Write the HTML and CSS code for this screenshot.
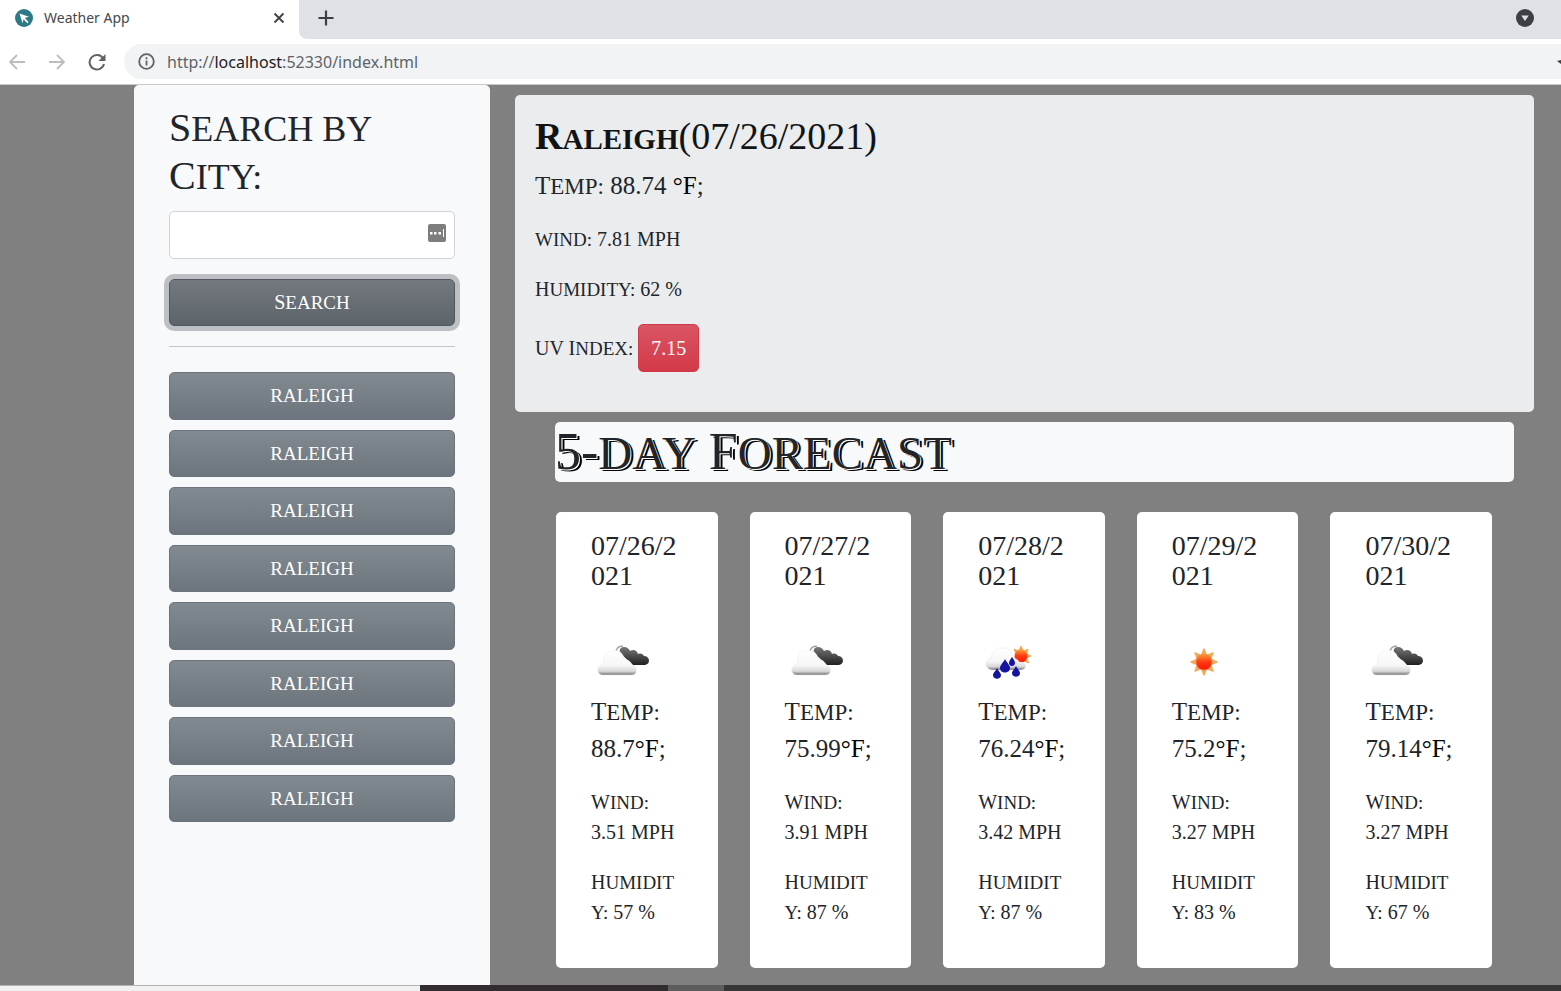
FILE: index.html
```html
<!DOCTYPE html>
<html lang="en">
<head>
<meta charset="utf-8">
<title>Weather App</title>
<link rel="stylesheet" href="styles.css">
</head>
<body>
<svg class="defs" aria-hidden="true">
  <defs>
    <linearGradient id="white-cloud" x1="0" y1="0" x2="0" y2="1">
      <stop offset="0" stop-color="#fff"/><stop offset=".6" stop-color="#f7f7f7"/><stop offset=".85" stop-color="#d8d8d8"/><stop offset="1" stop-color="#707070"/>
    </linearGradient>
    <linearGradient id="dark-cloud" x1="0" y1="0" x2="0" y2="1">
      <stop offset="0" stop-color="#777"/><stop offset=".5" stop-color="#4c4c4c"/><stop offset="1" stop-color="#202020"/>
    </linearGradient>
    <linearGradient id="sun-disc" x1="0" y1="0" x2="0" y2="1">
      <stop offset="0" stop-color="#f9a03a"/><stop offset=".5" stop-color="#ff3a10"/><stop offset="1" stop-color="#fb1508"/>
    </linearGradient>
    <symbol id="clouds" viewBox="0 0 64 64">
      <path d="M29 24c-1-4 1-6 4-6 3 0 5 2 6 4 3-2 7-1 8 3 3-1 5 0 6 2 6 0 7 8 1 9H42z" fill="url(#dark-cloud)"/>
      <path d="M25 24c0-5 3-7 7-7" fill="none" stroke="#a5a5a5" stroke-width="1.500"/>
      <path d="M12 46c-6 0-8-8 0-11 0-9 4-14 10-13 6-2 11 3 11 9 4-1 7 2 8 5 6 1 6 10 0 10z" fill="url(#white-cloud)" stroke="#ececec" stroke-width=".5"/>
    </symbol>
    <symbol id="sun" viewBox="0 0 64 64">
      <path d="M32 20l2 5h-4zM32 46l2-5h-4zM19 33l5-2v4zM45 33l-5-2v4zM23 24l5 2-3 3zM41 24l-5 2 3 3zM23 42l5-2-3-3zM41 42l-5-2 3-3z" fill="#f0ac5c" stroke="#f0ac5c" stroke-width="1.500" stroke-linejoin="round"/>
      <circle cx="32" cy="33" r="8" fill="url(#sun-disc)" stroke="#ee8240" stroke-width=".6"/>
    </symbol>
    <symbol id="showers" viewBox="0 0 64 64">
      <path d="M43 17l2 4h-4zM53 27l-5-2v4zM36 20l5 2-3 3zM50 20l-4 2 3 2zM51 34l-5-2 3-2z" fill="#f0ac5c" stroke="#f0ac5c" stroke-linejoin="round"/>
      <circle cx="43" cy="27" r="6.500" fill="url(#sun-disc)"/>
      <path d="M14 41c-8-1-8-11-1-12 2-8 6-11 11-10 7-1 10 4 10 11 3-1 6 0 7 3 8 0 9 7 2 8z" fill="url(#white-cloud)" stroke="#e4e4e4" stroke-width=".5"/>
      <path d="M27 30c2 4 5 6 5 9 0 6-10 6-10 0 0-3 3-5 5-9zM34 28c2 3 3 4 3 6 0 4-6 4-6 0 0-2 1-3 3-6zM19 39c2 4 4 5 4 7 0 5-8 5-8 0 0-2 2-3 4-7zM38 37c2 4 4 5 4 7 0 5-8 5-8 0 0-2 2-3 4-7z" fill="#1414a0"/>
    </symbol>
  </defs>
</svg>

<header class="browser">
  <div class="tabs">
    <div class="tab">
      <svg class="favicon" viewBox="0 0 18 18" aria-hidden="true"><circle cx="9" cy="9" r="9" fill="#2c7a86"/><path d="M4.500 4.500l9.500 3.200-4.200 1.400 3.700 4-1.200 1.200-3.800-4-.9 4z" fill="#fff"/></svg>
      <span class="tab-title">Weather App</span>
      <button class="icon-button" aria-label="Close tab"><svg width="12" height="12" viewBox="0 0 12 12"><path d="M1.500 1.500l9 9m0-9l-9 9" stroke="#3c4043" stroke-width="1.800"/></svg></button>
    </div>
    <button class="icon-button new-tab" aria-label="New tab"><svg width="16" height="16" viewBox="0 0 16 16"><path d="M8 .5v15M.5 8h15" stroke="#3c4043" stroke-width="2.200"/></svg></button>
    <button class="icon-button tab-search" aria-label="Search tabs"><svg width="18" height="18" viewBox="0 0 18 18"><circle cx="9" cy="9" r="9" fill="#3c4043"/><path d="M5.200 6.500h7.600L9 12z" fill="#dee1e6"/></svg></button>
  </div>
  <div class="toolbar">
    <button class="icon-button" aria-label="Back"><svg width="18" height="16" viewBox="0 0 18 16"><path d="M17 8H2m7-7L2 8l7 7" fill="none" stroke="#bbbdbf" stroke-width="1.800"/></svg></button>
    <button class="icon-button" aria-label="Forward"><svg width="18" height="16" viewBox="0 0 18 16"><path d="M1 8h15M9 1l7 7-7 7" fill="none" stroke="#bbbdbf" stroke-width="1.800"/></svg></button>
    <button class="icon-button" aria-label="Reload"><svg width="18" height="18" viewBox="0 0 18 18"><path d="M15 5.200A7.300 7.300 0 1 0 16 11" fill="none" stroke="#5f6368" stroke-width="2"/><path d="M17.500 1v7h-7z" fill="#5f6368"/></svg></button>
    <div class="address">
      <svg width="17" height="17" viewBox="0 0 17 17" aria-hidden="true"><circle cx="8.500" cy="8.500" r="7.300" fill="none" stroke="#5f6368" stroke-width="1.800"/><path d="M8.500 7.600v5M8.500 4.200v2" stroke="#5f6368" stroke-width="1.800"/></svg>
      <span class="url">http://<span class="host">localhost</span>:52330/index.html</span>
      <svg class="star" width="4" height="12" viewBox="0 0 4 12" aria-hidden="true"><path d="M0 5l4-1v4z" fill="#3c4043"/></svg>
    </div>
  </div>
</header>

<div class="page">
  <aside class="sidebar">
    <form>
      <h1><label for="city">S<span class="sc">earch by</span> C<span class="sc">ity:</span></label></h1>
      <div class="field">
        <input id="city" type="text">
        <svg class="autofill" viewBox="0 0 18 18" aria-hidden="true"><rect width="18" height="18" rx="2" fill="#7d7d7d"/><path d="M2 8h2.500v2.500H2zM6 8h2.500v2.500H6zM10.500 8H13v2.500h-2.500zM15 5h1v8h-1z" fill="#fff"/></svg>
      </div>
      <button class="btn search" type="button">S<span class="sc">earch</span></button>
    </form>
    <hr>
    <div class="history">
      <button class="btn"><span class="sc">raleigh</span></button>
      <button class="btn"><span class="sc">raleigh</span></button>
      <button class="btn"><span class="sc">raleigh</span></button>
      <button class="btn"><span class="sc">raleigh</span></button>
      <button class="btn"><span class="sc">raleigh</span></button>
      <button class="btn"><span class="sc">raleigh</span></button>
      <button class="btn"><span class="sc">raleigh</span></button>
      <button class="btn"><span class="sc">raleigh</span></button>
    </div>
  </aside>

  <main>
    <section class="today">
      <h2><b>R<span class="sc">aleigh</span></b>(07/26/2021)</h2>
      <p class="temp">T<span class="sc">emp:</span> 88.74 <span class="unit">°F</span>;</p>
      <p><span class="sc">wind:</span> 7.81 MPH</p>
      <p>H<span class="sc">umidity:</span> 62 %</p>
      <p>UV I<span class="sc">ndex:</span> <button class="btn uv">7.15</button></p>
    </section>
    <section class="forecast">
      <h2 class="forecast-title">5-<span class="sc">day</span> F<span class="sc">orecast</span></h2>
      <div class="days">
        <article class="day">
          <h3>07/26/2021</h3>
          <svg class="weather"><use href="#clouds"/></svg>
          <p class="temp">T<span class="sc">emp:</span> 88.7<span class="unit">°F</span>;</p>
          <p>W<span class="sc">ind:</span><br>3.51 MPH</p>
          <p>H<span class="sc">umidit</span><wbr><span class="sc">y:</span> 57 %</p>
        </article>
        <article class="day">
          <h3>07/27/2021</h3>
          <svg class="weather"><use href="#clouds"/></svg>
          <p class="temp">T<span class="sc">emp:</span> 75.99<span class="unit">°F</span>;</p>
          <p>W<span class="sc">ind:</span><br>3.91 MPH</p>
          <p>H<span class="sc">umidit</span><wbr><span class="sc">y:</span> 87 %</p>
        </article>
        <article class="day">
          <h3>07/28/2021</h3>
          <svg class="weather"><use href="#showers"/></svg>
          <p class="temp">T<span class="sc">emp:</span> 76.24<span class="unit">°F</span>;</p>
          <p>W<span class="sc">ind:</span><br>3.42 MPH</p>
          <p>H<span class="sc">umidit</span><wbr><span class="sc">y:</span> 87 %</p>
        </article>
        <article class="day">
          <h3>07/29/2021</h3>
          <svg class="weather"><use href="#sun"/></svg>
          <p class="temp">T<span class="sc">emp:</span> 75.2<span class="unit">°F</span>;</p>
          <p>W<span class="sc">ind:</span><br>3.27 MPH</p>
          <p>H<span class="sc">umidit</span><wbr><span class="sc">y:</span> 83 %</p>
        </article>
        <article class="day">
          <h3>07/30/2021</h3>
          <svg class="weather"><use href="#clouds"/></svg>
          <p class="temp">T<span class="sc">emp:</span> 79.14<span class="unit">°F</span>;</p>
          <p>W<span class="sc">ind:</span><br>3.27 MPH</p>
          <p>H<span class="sc">umidit</span><wbr><span class="sc">y:</span> 67 %</p>
        </article>
      </div>
    </section>
  </main>
</div>
<footer class="window-edge"><span class="edge-light"></span><span class="edge-dark"></span><span class="edge-tab"></span><span class="edge-rest"></span></footer>
</body>
</html>
```
FILE: styles.css
```css
* { box-sizing: border-box; }

body {
  margin: 0;
  min-height: 100vh;
  display: flex;
  flex-direction: column;
  background: #808080;
  color: #212529;
  font: 20px/30px "Liberation Serif", serif;
}

h1, h2, h3, p { margin: 0; font-weight: 400; }
.defs { position: absolute; width: 0; height: 0; }

/* Letters drawn as lower capitals beside full capitals */
.sc { text-transform: uppercase; font-size: 19px; line-height: 1; }

/* Browser chrome */
.browser { font-family: "Noto Sans", sans-serif; border-bottom: 1px solid #c9cacc; background: #fff; }
.tabs {
  display: flex;
  align-items: center;
  height: 39px;
  background: linear-gradient(90deg, #fff 320px, #dee1e6 320px);
}
.tab {
  display: flex;
  align-items: center;
  align-self: stretch;
  width: 299px;
  padding: 0 14px 3px 15px;
  background: #fff;
}
.favicon { width: 18px; height: 18px; margin-right: 11px; }
.tab-title { flex: 1; font-size: 14px; line-height: 20px; color: #45484c; }
.icon-button {
  display: flex;
  padding: 0;
  border: 0;
  background: none;
}
.new-tab {
  align-self: stretch;
  align-items: center;
  flex: 1;
  padding: 0 0 3px 19px;
  border-radius: 0 0 0 8px;
  background: #dee1e6;
}
.tab-search { padding: 0 27px 3px 0; }
.toolbar { display: flex; align-items: center; gap: 22px; height: 45px; padding-left: 8px; }
.address {
  display: flex;
  align-items: center;
  flex: 1;
  height: 35px;
  margin-left: -4px;
  padding-left: 14px;
  border-radius: 18px 0 0 18px;
  background: #f1f3f4;
}
.url { flex: 1; margin-left: 12px; font-size: 16px; line-height: 24px; color: #5f6368; }
.host { color: #202124; }

/* Page */
.page {
  flex: 1;
  display: grid;
  grid-template-columns: 134fr 356fr 25fr 1019fr 27fr;
}
.sidebar {
  grid-column: 2;
  padding: 19px 35px;
  border-radius: 5px 5px 0 0;
  background: #f8f9fb;
}
.sidebar h1 { margin-bottom: 11px; font-size: 40px; line-height: 48px; }
.sidebar h1 .sc { font-size: 36px; }
.field { position: relative; }
.field input {
  display: block;
  width: 100%;
  height: 48px;
  padding: 8px 40px 8px 12px;
  border: 1px solid #ced4da;
  border-radius: 5px;
  background: #fff;
  font: inherit;
}
.autofill { position: absolute; top: 13px; right: 9px; width: 18px; height: 18px; }
.btn {
  padding: 8px 15px;
  border: 1px solid #6c757d;
  border-radius: 5px;
  background: linear-gradient(#828a91, #6c757d);
  color: #fff;
  font: inherit;
  line-height: 29px;
}
.search {
  display: block;
  width: 100%;
  margin-top: 20px;
  border-color: #51585e;
  background: linear-gradient(#74797f, #5c636a);
  box-shadow: 0 0 0 5px #bcc0c5;
}
hr { margin: 20px 0 25px; border: 0; border-top: 1px solid #c5c7ca; }
.history { display: grid; gap: 10px; min-height: 450px; }

main { grid-column: 4; padding: 10px 0; }
.today { padding: 20px; border-radius: 5px; background: #ebecee; }
.today h2 { margin-bottom: 10px; font-size: 38px; line-height: 42px; color: #111417; }
.today h2 .sc { font-size: 29px; }
.today b { font-weight: 700; }
p { margin-bottom: 20px; }
.temp { font-size: 25px; line-height: 37px; }
.temp .sc { font-size: 23px; }
.unit { color: #000; }
.uv {
  padding: 8px 12px;
  border-color: #cf3a49;
  background: linear-gradient(#da5564, #d33a49);
  line-height: 30px;
}

.forecast { padding: 10px 20px 0 40px; }
.forecast-title {
  border-radius: 5px;
  background: #f8f9fb;
  font-size: 52px;
  line-height: 60px;
  text-shadow: 1px 1px 0 #fff, 3px 2px 0 #000;
}
.forecast-title .sc { font-size: 47px; }
.days {
  display: grid;
  grid-template-columns: repeat(5, 1fr);
  gap: 32px;
  margin: 30px 22px 0 1px;
}
.day { padding: 19px 35px 21px; border-radius: 5px; background: #fff; }
.day h3 { margin-bottom: 38px; font-size: 28px; line-height: 30px; word-break: break-all; }
.weather { display: block; width: 64px; height: 64px; }

/* Strip below the page area */
.window-edge { display: flex; height: 6px; background: #f1f1f1; }
.edge-light { flex: 420; border-top: 1px solid #b4b4b4; }
.edge-dark { flex: 248; background: #322c31; }
.edge-tab { flex: 56; background: #5d5d5d; }
.edge-rest { flex: 837; background: #363636; }
```
